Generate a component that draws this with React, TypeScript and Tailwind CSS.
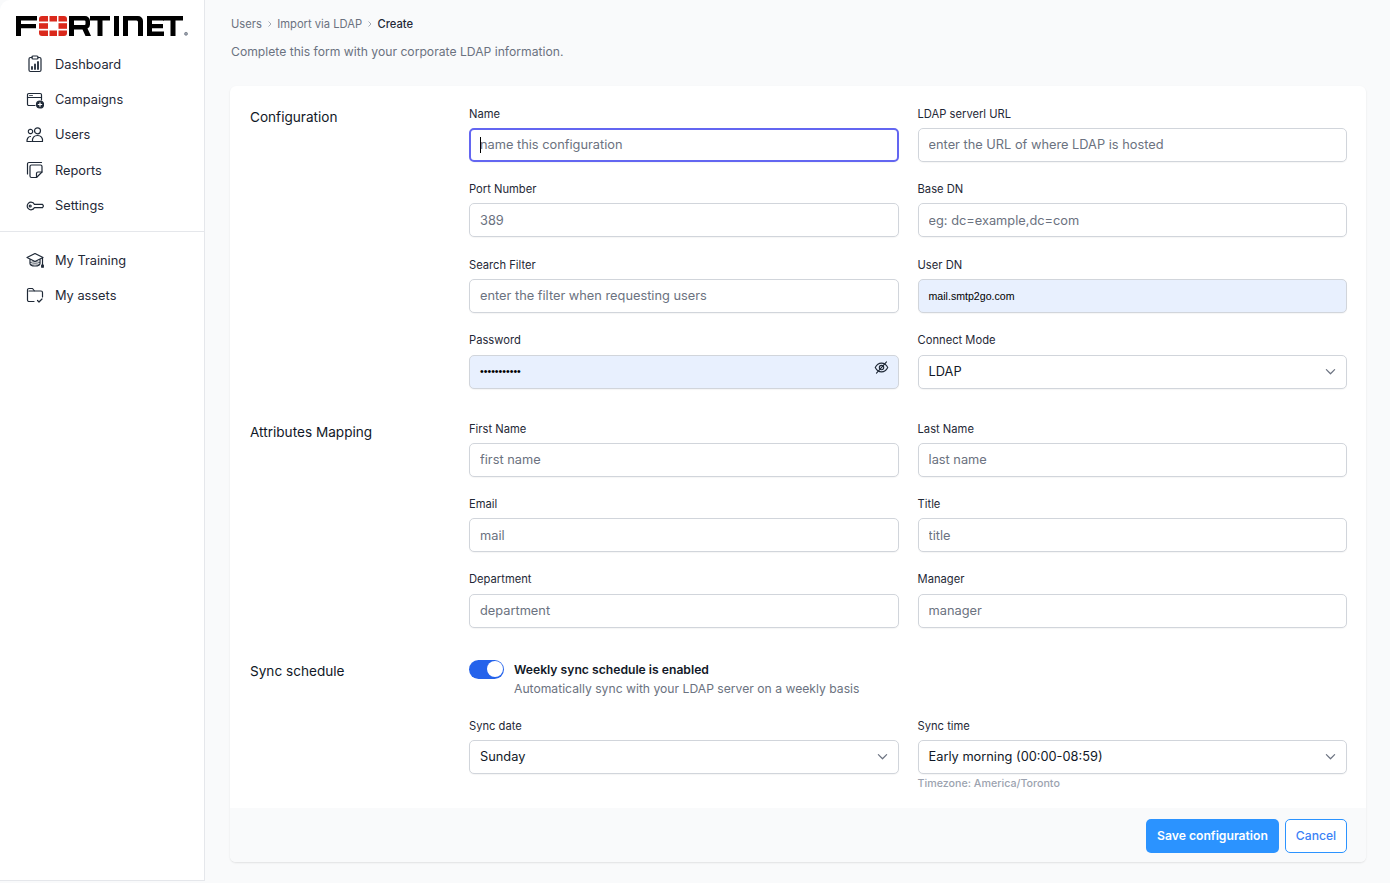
import React from "react";

const ic = "w-[18px] h-[18px] shrink-0";
const stroke = { fill: "none", stroke: "#1f2937", strokeWidth: 1.2, strokeLinecap: "round" as const, strokeLinejoin: "round" as const };

const IconDash = () => (
  <svg viewBox="0 0 18 18" className={ic} {...stroke}>
    <path d="M6 2.500H4.500A1.500 1.500 0 0 0 3 4v11a1.500 1.500 0 0 0 1.500 1.500h9A1.500 1.500 0 0 0 15 15V4a1.500 1.500 0 0 0-1.500-1.500H12" />
    <rect x="6" y="1" width="6" height="3" rx="1" />
    <path d="M6 14v-2M9 14V9.500M12 14V7" strokeWidth="1.800" />
  </svg>
);
const IconCamp = () => (
  <svg viewBox="0 0 18 18" className={ic} {...stroke}>
    <path d="M9 14.500H2.800A1.300 1.300 0 0 1 1.500 13.200V3.800A1.300 1.300 0 0 1 2.800 2.500h11.400a1.300 1.300 0 0 1 1.300 1.300V9" />
    <path d="M1.500 6.500h14" />
    <path d="M3.500 4.500h3" strokeWidth="0.800" />
    <circle cx="14" cy="13.500" r="3.500" fill="#1f2937" />
    <path d="M14 11.800v3.400M12.300 13.500h3.400" stroke="#fff" />
  </svg>
);
const IconUsers = () => (
  <svg viewBox="0 0 18 18" className={ic} {...stroke}>
    <circle cx="11.500" cy="4.800" r="3" />
    <path d="M6.500 15.500c-.5-3.500 1.500-6 5-6s5.500 2.500 5 6z" />
    <circle cx="4.500" cy="5.500" r="2.200" strokeDasharray="1.400 0.800" />
    <path d="M1 15.500c-.2-2.500 1-5 3.500-5M1 15.500h4.500" />
  </svg>
);
const IconReports = () => (
  <svg viewBox="0 0 18 18" className={ic} {...stroke}>
    <path d="M1.500 13V3a1.500 1.500 0 0 1 1.500-1.500h12.500" />
    <path d="M4 5.500A1.500 1.500 0 0 1 5.500 4h9A1.500 1.500 0 0 1 16 5.500V11l-5.500 5.500h-5A1.500 1.500 0 0 1 4 15z" />
    <path d="M16 11h-4a1.500 1.500 0 0 0-1.500 1.500v4" />
  </svg>
);
const IconKey = () => (
  <svg viewBox="0 0 18 18" className={ic} {...stroke}>
    <path d="M5 5.200a3.800 3.800 0 1 0 0 7.600c1.700 0 3-1 3.500-2.200h8l1-1.600-1-1.600h-8C8 6.200 6.700 5.200 5 5.200z" />
    <circle cx="4.200" cy="9" r="1" />
  </svg>
);
const IconTraining = () => (
  <svg viewBox="0 0 18 18" className={ic} {...stroke}>
    <path d="M9 2.500 1 6.500l8 4 8-4z" />
    <path d="M4 8.500v4c0 1.500 2.500 2.500 5 2.500s5-1 5-2.500v-4" />
    <path d="M4.500 11.500c2.500-1 6.500-1 9 0M4.500 13.500c2.500-1 6.500-1 9 0" strokeWidth="0.800" />
    <path d="M16.500 7v7" />
    <rect x="15.700" y="14.200" width="1.600" height="2" fill="#1f2937" />
  </svg>
);
const IconAssets = () => (
  <svg viewBox="0 0 18 18" className={ic} {...stroke}>
    <path d="M8 15.500H3A1.500 1.500 0 0 1 1.500 14V4A1.500 1.500 0 0 1 3 2.500h3.500l2 2.500H15A1.500 1.500 0 0 1 16.500 6.500V11" />
    <path d="M3 5h5" />
    <path d="M11.500 14.500l1.500 1.500 3-3" />
  </svg>
);

const Logo = () => (
  <svg viewBox="0 0 172 20" className="w-[172px] h-[20px] block" aria-label="FORTINET">
    <g fill="#000">
      <path d="M0 0h21v4.500H5v3.500h15v4.300H5V20H0z" />
      <path fillRule="evenodd" d="M53 0h16a5 5 0 0 1 5 5v3.500a4.500 4.500 0 0 1-2.500 4L75 20h-5.500l-3-6.500H58V20h-5zM58 4.500V9h10.500a1 1 0 0 0 1-1V5.500a1 1 0 0 0-1-1z" />
      <path d="M74 0h20v4.500h-7.500V20h-5V4.500H74z" />
      <rect x="98" y="0" width="5" height="20" />
      <path d="M107 0h15a5 5 0 0 1 5 5v15h-5V6a1.500 1.500 0 0 0-1.500-1.500H112V20h-5z" />
      <path d="M131 0h17v4.500h-12v3.500h11v4.300h-11v3.200h12V20h-17z" />
      <path d="M147 0h20v4.500h-7.500V20h-5V4.500H147z" />
    </g>
    <g fill="#da291c">
      <path d="M23 3a3 3 0 0 1 3-3h6v5.500h-9z" />
      <rect x="33.500" y="0" width="7.500" height="5.500" />
      <path d="M42.500 0H48a3 3 0 0 1 3 3v2.500h-8.500z" />
      <rect x="23" y="7.200" width="9" height="5.600" />
      <rect x="42.500" y="7.200" width="8.500" height="5.600" />
      <path d="M23 14.500h9V20h-6a3 3 0 0 1-3-3z" />
      <rect x="33.500" y="14.500" width="7.500" height="5.500" />
      <path d="M42.500 14.500H51V17a3 3 0 0 1-3 3h-5.500z" />
    </g>
    <circle cx="170" cy="17.800" r="1.500" fill="#9ca3af" stroke="#6b7280" strokeWidth="0.700" />
  </svg>
);

const NavItem = ({ icon, label }: { icon: React.ReactNode; label: string }) => (
  <div className="flex items-center h-[35.300px] pl-[26px] gap-[11px] text-[12.800px] text-[#1f2937]">
    {icon}
    <span>{label}</span>
  </div>
);

const inputBase = "w-full h-[34px] rounded-[5px] border border-[#d1d5db] bg-white pl-[10px] pr-[10px] pb-[0.400px] text-[12.800px] text-[#111827] placeholder:text-[#6b7280] outline-none shadow-[0_1px_1px_rgba(0,0,0,0.04)]";
const labelCls = "block text-[11.200px] leading-[16px] mb-[6.300px] text-[#1f2937]";
const labelCls2 = "block text-[11.200px] leading-[16px] mb-[6.400px] text-[#1f2937]";

const Field = ({ label, placeholder, cls = labelCls }: { label: string; placeholder: string; cls?: string }) => (
  <div className="flex flex-col">
    <label className={cls}>{label}</label>
    <input className={inputBase} placeholder={placeholder} readOnly />
  </div>
);

const SelectField = ({ label, value, hint, cls = labelCls }: { label: string; value: string; hint?: string; cls?: string }) => (
  <div className="flex flex-col relative">
    <label className={cls}>{label}</label>
    <div className={inputBase + " flex items-center justify-between"}>
      <span>{value}</span>
      <svg viewBox="0 0 12 12" className="w-[11px] h-[11px]" fill="none" stroke="#6b7280" strokeWidth="1.300" strokeLinecap="round" strokeLinejoin="round"><path d="M1.500 4l4.500 4.500L10.500 4" /></svg>
    </div>
    {hint && <p className="absolute top-[58px] left-0 text-[10.700px] leading-[16px] font-medium text-[#9ca3af]">{hint}</p>}
  </div>
);

const Section = ({ title, children }: { title: string; children: React.ReactNode }) => (
  <div className="flex">
    <h2 className="w-[219px] shrink-0 text-[13.600px] leading-[20px] text-[#111827] pt-[1.300px]">{title}</h2>
    <div className="flex-1 min-w-0">{children}</div>
  </div>
);

const Chevron = () => (
  <span className="mx-[4.700px]"><svg viewBox="0 0 6 8" className="w-[6px] h-[8px]" fill="none" stroke="#9ca3af" strokeWidth="0.900"><path d="M1.500 1.500 4 4 1.500 6.500" /></svg></span>
);

const syncLabel = "block text-[11.200px] leading-[16px] mb-[6px] text-[#1f2937]";

export default function App() {
  return (
    <div className="flex h-[883px] overflow-hidden bg-[#f9fafb] font-['Inter',sans-serif]">
      <aside className="w-[205px] h-[881px] shrink-0 bg-white border-r border-b border-[#e5e7eb] rounded-tl-[10px]">
        <div className="pl-[16px] pt-[16px]"><Logo /></div>
        <nav className="mt-[10.700px]">
          <NavItem icon={<IconDash />} label="Dashboard" />
          <NavItem icon={<IconCamp />} label="Campaigns" />
          <NavItem icon={<IconUsers />} label="Users" />
          <NavItem icon={<IconReports />} label="Reports" />
          <NavItem icon={<IconKey />} label="Settings" />
        </nav>
        <div className="border-t border-[#e5e7eb] mt-[8.300px] pt-[10px]">
          <NavItem icon={<IconTraining />} label="My Training" />
          <NavItem icon={<IconAssets />} label="My assets" />
        </div>
      </aside>
      <main className="flex-1 min-w-0 pl-[25px] pr-[24px]">
        <div className="flex items-center pt-[16px] h-[32px] text-[11.200px] leading-[16px] text-[#6b7280]">
          <span className="ml-[1px]">Users</span>
          <Chevron />
          <span>Import via LDAP</span>
          <Chevron />
          <span className="font-medium text-[#1f2937]">Create</span>
        </div>
        <p className="mt-[10px] ml-[1px] text-[12.160px] leading-[20px] text-[#6b7280]">Complete this form with your corporate LDAP information.</p>
        <div className="mt-[24px] bg-white rounded-[6px] shadow-[0_1px_2px_rgba(0,0,0,0.1)] overflow-hidden">
          <div className="pl-[20px] pr-[19px] pt-[19.500px] h-[722px]">
            <Section title="Configuration">
              <div className="grid grid-cols-[429.550px_1fr] gap-x-[19px] gap-y-[19.300px]">
                <div className="flex flex-col">
                  <label className={labelCls}>Name</label>
                  <div className={inputBase + " flex items-center !border-2 !border-[#6366f1] !pl-[9px] relative"}>
                    <span className="absolute left-[9px] top-[7px] w-px h-[16px] bg-black" />
                    <span className="text-[#6b7280]">name this configuration</span>
                  </div>
                </div>
                <Field label="LDAP serverl URL" placeholder="enter the URL of where LDAP is hosted" />
                <Field label="Port Number" placeholder="389" />
                <Field label="Base DN" placeholder="eg: dc=example,dc=com" />
                <Field label="Search Filter" placeholder="enter the filter when requesting users" />
                <div className="flex flex-col">
                  <label className={labelCls}>User DN</label>
                  <div className={inputBase + " flex items-center !bg-[#e8f0fe] !pb-0 pt-[1.400px]"}>
                    <span className="text-[10.600px] text-black font-['Liberation_Sans',sans-serif]">mail.smtp2go.com</span>
                  </div>
                </div>
                <div className="flex flex-col">
                  <label className={labelCls}>Password</label>
                  <div className={inputBase + " flex items-center justify-between !bg-[#e8f0fe] !pb-0 pt-[0.600px] relative"}>
                    <span className="text-[10.600px] font-['Liberation_Sans',sans-serif] text-black">•••••••••••</span>
                    <svg viewBox="0 0 24 24" className="absolute right-[9px] top-[4px] w-[15px] h-[15px]" fill="none" stroke="#1f2937" strokeWidth="1.800" strokeLinecap="round" strokeLinejoin="round">
                      <path d="M2 12s3.500-7 10-7 10 7 10 7-3.500 7-10 7-10-7-10-7z" />
                      <circle cx="12" cy="12" r="3.500" />
                      <path d="M4 21 20 3" />
                    </svg>
                  </div>
                </div>
                <SelectField label="Connect Mode" value="LDAP" />
              </div>
            </Section>
            <div className="mt-[31.950px]">
              <Section title="Attributes Mapping">
                <div className="grid grid-cols-[429.550px_1fr] gap-x-[19px] gap-y-[19.050px]">
                  <Field cls={labelCls2} label="First Name" placeholder="first name" />
                  <Field cls={labelCls2} label="Last Name" placeholder="last name" />
                  <Field cls={labelCls2} label="Email" placeholder="mail" />
                  <Field cls={labelCls2} label="Title" placeholder="title" />
                  <Field cls={labelCls2} label="Department" placeholder="department" />
                  <Field cls={labelCls2} label="Manager" placeholder="manager" />
                </div>
              </Section>
            </div>
            <div className="mt-[31.950px]">
              <Section title="Sync schedule">
                <div className="flex items-start h-[40px]">
                  <span className="relative w-[35px] h-[19px] rounded-full bg-[#2563eb] shrink-0">
                    <span className="absolute right-[1.500px] top-[1.500px] w-[16px] h-[16px] rounded-full bg-white" />
                  </span>
                  <div className="ml-[10px]">
                    <p className="text-[12.160px] leading-[19px] font-semibold text-[#111827]">Weekly sync schedule is enabled</p>
                    <p className="text-[12.160px] leading-[19px] text-[#6b7280]">Automatically sync with your LDAP server on a weekly basis</p>
                  </div>
                </div>
                <div className="grid grid-cols-[429.550px_1fr] gap-x-[19px] mt-[18px]">
                  <SelectField cls={syncLabel} label="Sync date" value="Sunday" />
                  <SelectField cls={syncLabel} label="Sync time" value="Early morning (00:00-08:59)" hint="Timezone: America/Toronto" />
                </div>
              </Section>
            </div>
          </div>
          <div className="h-[54px] bg-[#f9fafb] flex items-start justify-end gap-[6px] pt-[11px] pr-[19px]">
            <button className="h-[34px] w-[133px] rounded-[5px] bg-[#2b93ff] text-white text-[12.160px] font-semibold">Save configuration</button>
            <button className="h-[34px] w-[62px] rounded-[5px] border border-[#2b93ff] bg-white text-[#3b82f6] text-[12.160px] font-medium">Cancel</button>
          </div>
        </div>
      </main>
    </div>
  );
}
